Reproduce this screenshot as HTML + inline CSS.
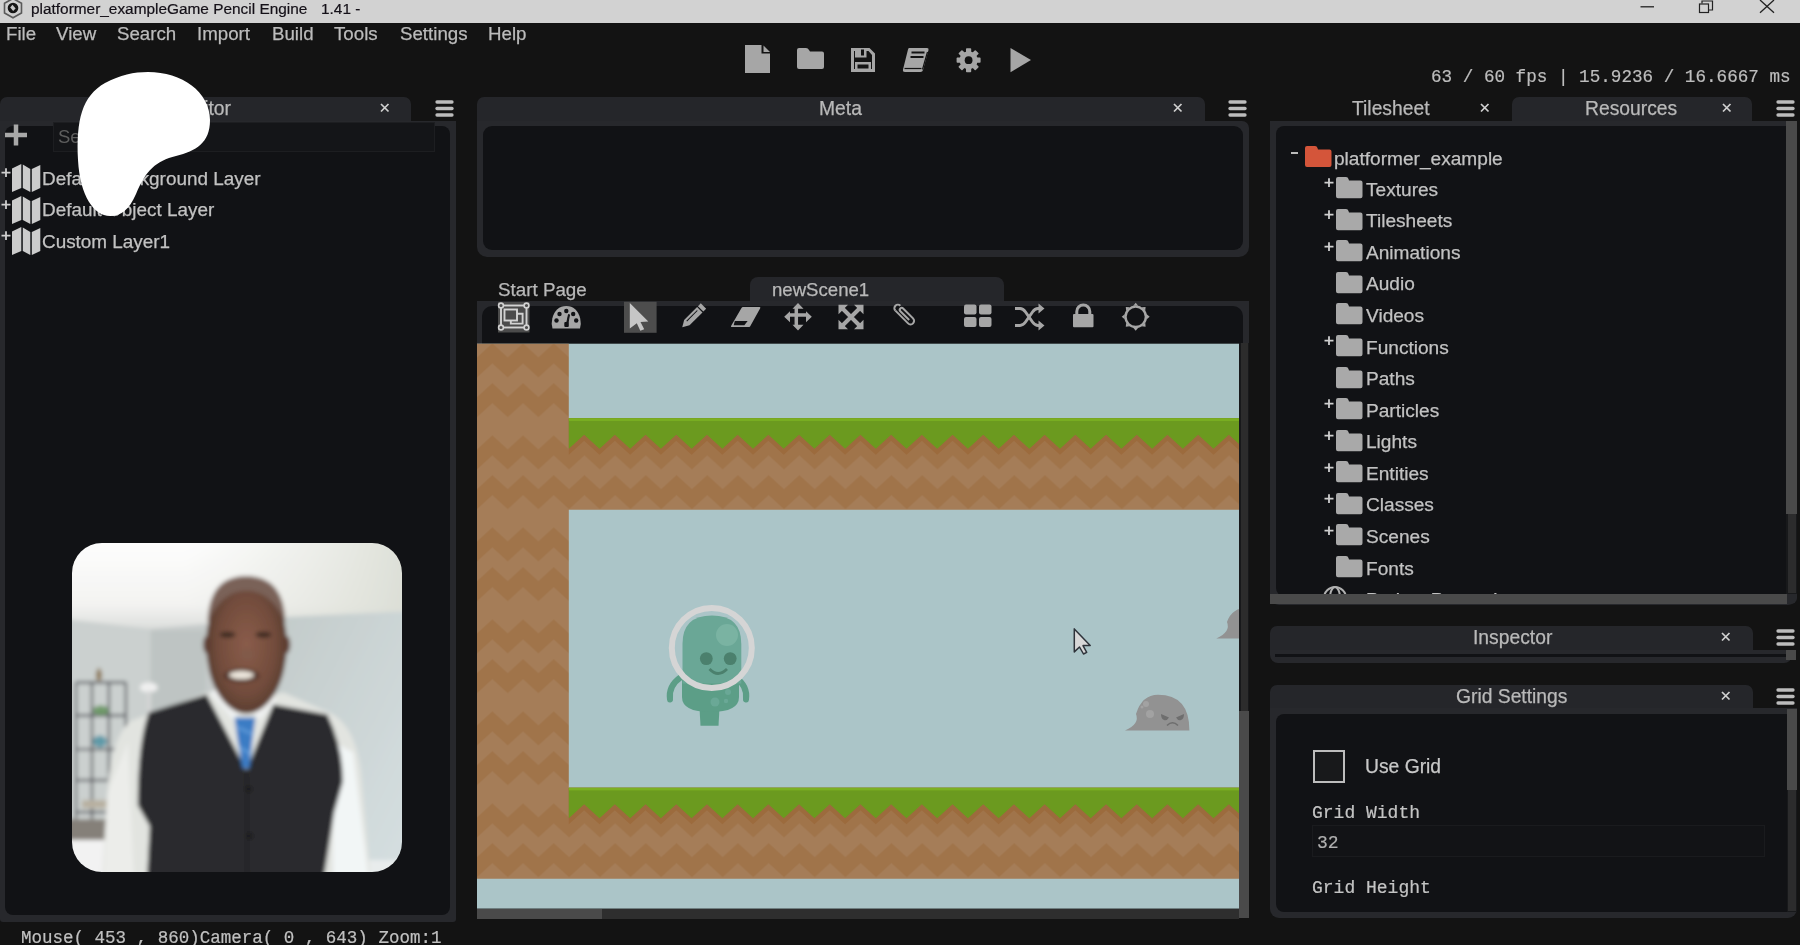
<!DOCTYPE html><html><head><meta charset="utf-8"><style>
*{margin:0;padding:0;box-sizing:border-box}
html,body{width:1800px;height:945px;overflow:hidden;background:#131313;font-family:"Liberation Sans",sans-serif;color:#b4b4b4}
.a{position:absolute}
.mono{font-family:"Liberation Mono",monospace}
.menu{top:22px;font-size:18.7px;color:#bcbcbc;line-height:24px;white-space:nowrap}
.hdr{background:#25262a;border-radius:7px 7px 0 0}
.frame{border:5px solid #27282c;background:#111215}
.ttl{font-size:19.3px;color:#b9b9b9;line-height:24px;white-space:nowrap;margin-top:1px}
.tree{font-size:19.1px;color:#c2c2c2;line-height:24px;white-space:nowrap;margin-top:1.5px}
svg{position:absolute;overflow:visible}
.a{will-change:transform}
.menu,.ttl,.tree{-webkit-text-stroke:0.25px currentColor}
.mono{-webkit-text-stroke:0.2px currentColor}
</style></head><body>
<div class="a" style="left:0;top:0;width:1800px;height:23px;background:#d2d2d2"></div>
<svg style="left:0;top:0" width="30" height="23"><path d="M13 -1.5 L21.5 3.3 L21.5 13 L13 17.8 L4.5 13 L4.5 3.3 Z" fill="#cfcfcf" stroke="#5a5a5a" stroke-width="1.6"/><circle cx="13" cy="8" r="5.3" fill="#151515"/><path d="M12.5 4.8 L15.6 8.6 L13.2 11 L10.2 7.4 Z" fill="#c8c8c8"/></svg>
<div class="a" style="left:31px;top:-3px;font-size:15.4px;line-height:24px;color:#141018;white-space:nowrap;-webkit-text-stroke:0.2px #141018">platformer_exampleGame Pencil Engine</div>
<div class="a" style="left:321px;top:-3px;font-size:15.4px;line-height:24px;color:#141018;white-space:nowrap;-webkit-text-stroke:0.2px #141018">1.41 -</div>
<svg style="left:0;top:0" width="1800" height="23"><line x1="1640.5" y1="6.8" x2="1654" y2="6.8" stroke="#222" stroke-width="1.3"/><rect x="1699.5" y="4" width="9" height="8.5" fill="none" stroke="#222" stroke-width="1.2"/><path d="M1702 3.5 V1 H1712.5 V10 H1709" fill="none" stroke="#222" stroke-width="1.2"/><path d="M1760 0 L1774 12.8 M1774 0 L1760 12.8" stroke="#222" stroke-width="1.3"/></svg>
<div class="a menu" style="left:6px">File</div>
<div class="a menu" style="left:56px">View</div>
<div class="a menu" style="left:117px">Search</div>
<div class="a menu" style="left:197px">Import</div>
<div class="a menu" style="left:272px">Build</div>
<div class="a menu" style="left:334px">Tools</div>
<div class="a menu" style="left:400px">Settings</div>
<div class="a menu" style="left:488px">Help</div>
<svg style="left:0;top:0" width="1800" height="90" fill="#a6a6a6"><path d="M745 45 H761.5 V53.5 H770 V73 H745 Z"/><path d="M763.5 45.5 L770 52 H763.5 Z"/><path d="M799 48 H806 Q808 48 809 50 L810 51.5 H822 Q824 51.5 824 53.5 V67 Q824 69 822 69 H799 Q797 69 797 67 V50 Q797 48 799 48 Z"/><path fill-rule="evenodd" d="M851 48 H869.5 L875 53.5 V72 H851 Z M854 51 V69 H872 V55 L868.5 51 H866.5 V57.5 H855 V51 Z"/><rect x="861" y="49.5" width="3" height="6" fill="#121212"/><path fill-rule="evenodd" d="M855 62 H871 V72 H855 Z M857.5 64.5 V68.5 H868.5 V64.5 Z"/><path d="M909 48 H927 Q929 48 928.5 50 L923 70 Q922.5 72 920.5 72 H905 Q902.5 72 903 69.5 L908 49.5 Q908.3 48 909 48 Z"/><path d="M922.5 69.5 L927.5 52" stroke="#121212" stroke-width="1.2"/><path d="M904.5 68.5 H921.5" stroke="#121212" stroke-width="1.2"/><path d="M911.5 52.5 H924.5 M910.5 57 H923.5" stroke="#121212" stroke-width="1.9"/><g transform="translate(968.6 60.2)"><circle r="9" /><g><rect x="-2.6" y="-12" width="5.2" height="6" rx="0.8" transform="rotate(0)"/><rect x="-2.6" y="-12" width="5.2" height="6" rx="0.8" transform="rotate(45)"/><rect x="-2.6" y="-12" width="5.2" height="6" rx="0.8" transform="rotate(90)"/><rect x="-2.6" y="-12" width="5.2" height="6" rx="0.8" transform="rotate(135)"/><rect x="-2.6" y="-12" width="5.2" height="6" rx="0.8" transform="rotate(180)"/><rect x="-2.6" y="-12" width="5.2" height="6" rx="0.8" transform="rotate(225)"/><rect x="-2.6" y="-12" width="5.2" height="6" rx="0.8" transform="rotate(270)"/><rect x="-2.6" y="-12" width="5.2" height="6" rx="0.8" transform="rotate(315)"/></g><circle r="3.9" fill="#121212"/></g><path d="M1010.5 48 L1031 60 L1010.5 72.2 Z"/></svg>
<div class="a mono" style="left:1431px;top:65px;font-size:17.64px;line-height:24px;color:#bdbdbd;white-space:pre">63 / 60 fps | 15.9236 / 16.6667 ms</div>
<div class="a hdr" style="left:0;top:97px;width:411px;height:24px"></div>
<div class="a" style="left:0;top:120.5px;width:456px;height:800.5px;background:#27282c;border-radius:0 0 3px 3px"></div>
<div class="a" style="left:5px;top:126px;width:445px;height:789px;background:#111215;border-radius:8px"></div>
<div class="a ttl" style="left:126.7px;top:96px">Layer Editor</div>
<svg style="left:380px;top:103px" width="10" height="10"><path d="M1 1 L8.5 8.5 M8.5 1 L1 8.5" stroke="#d0d0d0" stroke-width="1.75"/></svg>
<svg style="left:434.8px;top:100px" width="20" height="18"><g stroke="#bcbcbc" stroke-width="3.3" stroke-linecap="round"><line x1="2" y1="2" x2="17" y2="2"/><line x1="2" y1="8.5" x2="17" y2="8.5"/><line x1="2" y1="15" x2="17" y2="15"/></g></svg>
<svg style="left:0;top:120px" width="40" height="30"><path d="M5 15 H27 M16 4.5 V25.5" stroke="#a8a8a8" stroke-width="4.5"/></svg>
<div class="a" style="left:53px;top:122px;width:382px;height:30px;background:#141518;border:1px solid #1d1e21"></div>
<div class="a" style="left:58px;top:125px;font-size:18.5px;line-height:24px;color:#5e5e5e">Search...</div>
<svg style="left:1px;top:168.0px" width="12" height="12"><path d="M0.5 4.6 H9.5 M5 0.2 V9" stroke="#cfcfcf" stroke-width="1.8"/></svg>
<svg style="left:11.7px;top:164.0px" width="30" height="30" fill="#cccccc"><path d="M0 4.5 L9.3 0 V24 L0 28 Z"/><path d="M10.8 0.5 L18.3 5 V28 L10.8 24 Z"/><path d="M19.8 5 L28.3 1 V24 L19.8 28 Z"/></svg>
<div class="a tree" style="left:42px;top:165.2px;font-size:18.9px">Default Background Layer</div>
<svg style="left:1px;top:199.5px" width="12" height="12"><path d="M0.5 4.6 H9.5 M5 0.2 V9" stroke="#cfcfcf" stroke-width="1.8"/></svg>
<svg style="left:11.7px;top:195.5px" width="30" height="30" fill="#cccccc"><path d="M0 4.5 L9.3 0 V24 L0 28 Z"/><path d="M10.8 0.5 L18.3 5 V28 L10.8 24 Z"/><path d="M19.8 5 L28.3 1 V24 L19.8 28 Z"/></svg>
<div class="a tree" style="left:42px;top:196.7px;font-size:18.9px">Default Object Layer</div>
<svg style="left:1px;top:231.0px" width="12" height="12"><path d="M0.5 4.6 H9.5 M5 0.2 V9" stroke="#cfcfcf" stroke-width="1.8"/></svg>
<svg style="left:11.7px;top:227.0px" width="30" height="30" fill="#cccccc"><path d="M0 4.5 L9.3 0 V24 L0 28 Z"/><path d="M10.8 0.5 L18.3 5 V28 L10.8 24 Z"/><path d="M19.8 5 L28.3 1 V24 L19.8 28 Z"/></svg>
<div class="a tree" style="left:42px;top:228.2px;font-size:18.9px">Custom Layer1</div>
<div class="a hdr" style="left:477px;top:97px;width:727.5px;height:25px"></div>
<div class="a" style="left:477px;top:120.5px;width:772px;height:135.5px;border-radius:0 7px 10px 10px;background:#27282c"></div>
<div class="a" style="left:483px;top:126px;width:760px;height:124px;background:#111215;border-radius:9px"></div>
<div class="a ttl" style="left:819px;top:96px">Meta</div>
<svg style="left:1173px;top:103px" width="10" height="10"><path d="M1 1 L8.5 8.5 M8.5 1 L1 8.5" stroke="#d0d0d0" stroke-width="1.75"/></svg>
<svg style="left:1227.8px;top:100px" width="20" height="18"><g stroke="#bcbcbc" stroke-width="3.3" stroke-linecap="round"><line x1="2" y1="2" x2="17" y2="2"/><line x1="2" y1="8.5" x2="17" y2="8.5"/><line x1="2" y1="15" x2="17" y2="15"/></g></svg>
<div class="a" style="left:750px;top:277px;width:254px;height:26px;background:#25262a;border-radius:8px 8px 0 0"></div>
<div class="a ttl" style="left:497.5px;top:277px;font-size:18.8px">Start Page</div>
<div class="a ttl" style="left:771.5px;top:277px;font-size:18.6px">newScene1</div>
<div class="a" style="left:477px;top:301px;width:772px;height:45px;background:#27282c"></div>
<div class="a" style="left:482px;top:306px;width:761px;height:45px;background:#111215;border-radius:10px 10px 0 0"></div>
<svg style="left:0;top:0" width="1800" height="345" fill="#a6a6a6"><rect x="498" y="302" width="31.5" height="30.5" fill="#4b4b4b"/><g stroke="#d2d2d2" stroke-width="1.9" fill="none"><rect x="501" y="305.5" width="25.5" height="22"/><rect x="504.5" y="309.5" width="12.5" height="11" fill="#4a4a4a"/><path d="M517 313.8 H522.6 V323.6 H510.8 V320.5"/></g><g fill="#4b4b4b" stroke="#d2d2d2" stroke-width="1.6"><circle cx="501" cy="305.5" r="2.4"/><circle cx="526.5" cy="305.5" r="2.4"/><circle cx="501" cy="327.5" r="2.4"/><circle cx="526.5" cy="327.5" r="2.4"/></g><path d="M552.5 328.5 Q551 324 552.3 318.5 Q555.5 306 566.3 306 Q577 306 580.2 318.5 Q581.5 324 580 328.5 Z"/><g fill="#111215"><circle cx="566.3" cy="311" r="2.2"/><circle cx="559.5" cy="314" r="2.2"/><circle cx="573.2" cy="314" r="2.2"/><circle cx="556.5" cy="320.5" r="2.2"/><circle cx="576.2" cy="320.5" r="2.2"/><path d="M568.5 314.5 L566.8 322.5 L568 322.8 L569.5 314.8 Z" stroke="#111215" stroke-width="1"/><rect x="564.3" y="322" width="4.5" height="5" rx="1"/></g><rect x="624" y="301.8" width="32.6" height="31" fill="#4d4d4d"/><path d="M629.8 303 L648.3 321.5 L640.5 322 L644.2 329.3 L640.3 330.8 L636.8 323.3 L629.8 328.5 Z" fill="#c6c6c6"/><g transform="translate(692.5 317) rotate(45)"><path d="M-3.8 -15.5 H3.8 V-11.5 H-3.8 Z"/><path d="M-3.8 -10.3 H3.8 V8 L0 14.5 L-3.8 8 Z"/><path d="M-1.2 -8 V7" stroke="#111215" stroke-width="1"/></g><g transform="translate(746 317)"><path d="M-5 10 L-14.5 10 Q-15.5 10 -14.8 8.8 L-4.5 -9 Q-4 -10 -3 -10 H13.5 Q14.8 -10 14.2 -8.8 L4.5 8.8 Q4 10 3 10 Z"/><path d="M-11.2 4 L1.6 4 L-1.6 8.3 L-12.3 8.3 Z" fill="#111215"/></g><g transform="translate(798 316.8)"><path d="M-1.7 -10 V10 M-10 -1.7 H10" stroke="#a6a6a6" stroke-width="3.5"/><path d="M0 -13.8 L-5.5 -8 H5.5 Z M0 13.8 L-5.5 8 H5.5 Z M-13.8 0 L-8 -5.5 V5.5 Z M13.8 0 L8 -5.5 V5.5 Z"/></g><g transform="translate(851 317)"><path d="M-8 -8 L8 8 M8 -8 L-8 8" stroke="#a6a6a6" stroke-width="4"/><path d="M-12.5 -12.2 H-3 L-12.5 -2.7 Z M12.5 -12.2 H3 L12.5 -2.7 Z M-12.5 12.2 H-3 L-12.5 2.7 Z M12.5 12.2 H3 L12.5 2.7 Z"/></g><g transform="translate(904.5 317) rotate(45) scale(0.78)" fill="none" stroke="#a6a6a6" stroke-width="2.6"><path d="M-14 2.5 H9 A4.5 4.5 0 0 0 9 -6.5 H-9 A2.5 2.5 0 0 0 -9 -1.5 H7"/><path d="M-14 2.5 A4.5 4.5 0 0 1 -14 -6.5"/></g><rect x="964" y="304.5" width="12.5" height="10" rx="2"/><rect x="979" y="304.5" width="12.5" height="10" rx="2"/><rect x="964" y="317" width="12.5" height="10" rx="2"/><rect x="979" y="317" width="12.5" height="10" rx="2"/><g fill="none" stroke="#a6a6a6" stroke-width="3"><path d="M1015 308.5 H1020 Q1023 308.5 1025.5 312 L1032.5 322 Q1035 325.5 1038 325.5 H1040"/><path d="M1015 325.5 H1020 Q1023 325.5 1025.5 322 L1032.5 312 Q1035 308.5 1038 308.5 H1040"/></g><path d="M1038.5 303.5 L1044.5 308.5 L1038.5 313.5 Z M1038.5 320.5 L1044.5 325.5 L1038.5 330.5 Z"/><rect x="1073" y="314" width="20.5" height="13.3" rx="1"/><path d="M1076.8 314.5 V311.5 A6.5 6.5 0 0 1 1089.8 311.5 V314.5" fill="none" stroke="#a6a6a6" stroke-width="3"/><g transform="translate(1135.7 316.8)"><circle r="10.2" fill="none" stroke="#a6a6a6" stroke-width="2.4"/><path d="M-2.5 -11 L0 -14 L2.5 -11 Z" transform="rotate(0)"/><path d="M-2.5 -11 L0 -14 L2.5 -11 Z" transform="rotate(45)"/><path d="M-2.5 -11 L0 -14 L2.5 -11 Z" transform="rotate(90)"/><path d="M-2.5 -11 L0 -14 L2.5 -11 Z" transform="rotate(135)"/><path d="M-2.5 -11 L0 -14 L2.5 -11 Z" transform="rotate(180)"/><path d="M-2.5 -11 L0 -14 L2.5 -11 Z" transform="rotate(225)"/><path d="M-2.5 -11 L0 -14 L2.5 -11 Z" transform="rotate(270)"/><path d="M-2.5 -11 L0 -14 L2.5 -11 Z" transform="rotate(315)"/></g></svg>
<svg style="left:0;top:0" width="1800" height="945"><defs><clipPath id="gclip"><rect x="477" y="343.4" width="762" height="565.4"/></clipPath><pattern id="dirt" patternUnits="userSpaceOnUse" x="477" y="343.4" width="30.7" height="92"><rect width="30.7" height="92" fill="#a57d58"/><path d="M0 14 L15.35 0 L30.7 14 L30.7 34 L15.35 20 L0 34 Z" fill="#a0744a"/><path d="M0 53.7 L15.35 39.7 L30.7 53.7 L30.7 73.7 L15.35 59.7 L0 73.7 Z" fill="#a0744a"/><path d="M0 106 L15.35 92 L30.7 106 L30.7 126 L15.35 112 L0 126 Z" fill="#a0744a"/></pattern></defs><g clip-path="url(#gclip)"><rect x="477" y="343.4" width="762" height="565.4" fill="#abc5c8"/><path d="M477 343.4 H568.8 V418.3 H1250 V509.7 H568.8 V787.8 H1250 V878.8 H477 Z" fill="url(#dirt)"/><path d="M568.80 418.30 L1260.00 418.30 L1305.60 454.80 L1290.25 440.80 L1274.90 454.80 L1259.55 440.80 L1244.20 454.80 L1228.85 440.80 L1213.50 454.80 L1198.15 440.80 L1182.80 454.80 L1167.45 440.80 L1152.10 454.80 L1136.75 440.80 L1121.40 454.80 L1106.05 440.80 L1090.70 454.80 L1075.35 440.80 L1060.00 454.80 L1044.65 440.80 L1029.30 454.80 L1013.95 440.80 L998.60 454.80 L983.25 440.80 L967.90 454.80 L952.55 440.80 L937.20 454.80 L921.85 440.80 L906.50 454.80 L891.15 440.80 L875.80 454.80 L860.45 440.80 L845.10 454.80 L829.75 440.80 L814.40 454.80 L799.05 440.80 L783.70 454.80 L768.35 440.80 L753.00 454.80 L737.65 440.80 L722.30 454.80 L706.95 440.80 L691.60 454.80 L676.25 440.80 L660.90 454.80 L645.55 440.80 L630.20 454.80 L614.85 440.80 L599.50 454.80 L584.15 440.80 L568.80 454.80 Z" fill="#9c6b3d"/><path d="M568.80 418.30 L1260.00 418.30 L1305.60 448.80 L1290.25 434.80 L1274.90 448.80 L1259.55 434.80 L1244.20 448.80 L1228.85 434.80 L1213.50 448.80 L1198.15 434.80 L1182.80 448.80 L1167.45 434.80 L1152.10 448.80 L1136.75 434.80 L1121.40 448.80 L1106.05 434.80 L1090.70 448.80 L1075.35 434.80 L1060.00 448.80 L1044.65 434.80 L1029.30 448.80 L1013.95 434.80 L998.60 448.80 L983.25 434.80 L967.90 448.80 L952.55 434.80 L937.20 448.80 L921.85 434.80 L906.50 448.80 L891.15 434.80 L875.80 448.80 L860.45 434.80 L845.10 448.80 L829.75 434.80 L814.40 448.80 L799.05 434.80 L783.70 448.80 L768.35 434.80 L753.00 448.80 L737.65 434.80 L722.30 448.80 L706.95 434.80 L691.60 448.80 L676.25 434.80 L660.90 448.80 L645.55 434.80 L630.20 448.80 L614.85 434.80 L599.50 448.80 L584.15 434.80 L568.80 448.80 Z" fill="#6b9a1f"/><rect x="568.8" y="418.3" width="680" height="2.6" fill="#7bb022"/><path d="M568.80 787.80 L1260.00 787.80 L1305.60 824.30 L1290.25 810.30 L1274.90 824.30 L1259.55 810.30 L1244.20 824.30 L1228.85 810.30 L1213.50 824.30 L1198.15 810.30 L1182.80 824.30 L1167.45 810.30 L1152.10 824.30 L1136.75 810.30 L1121.40 824.30 L1106.05 810.30 L1090.70 824.30 L1075.35 810.30 L1060.00 824.30 L1044.65 810.30 L1029.30 824.30 L1013.95 810.30 L998.60 824.30 L983.25 810.30 L967.90 824.30 L952.55 810.30 L937.20 824.30 L921.85 810.30 L906.50 824.30 L891.15 810.30 L875.80 824.30 L860.45 810.30 L845.10 824.30 L829.75 810.30 L814.40 824.30 L799.05 810.30 L783.70 824.30 L768.35 810.30 L753.00 824.30 L737.65 810.30 L722.30 824.30 L706.95 810.30 L691.60 824.30 L676.25 810.30 L660.90 824.30 L645.55 810.30 L630.20 824.30 L614.85 810.30 L599.50 824.30 L584.15 810.30 L568.80 824.30 Z" fill="#9c6b3d"/><path d="M568.80 787.80 L1260.00 787.80 L1305.60 818.30 L1290.25 804.30 L1274.90 818.30 L1259.55 804.30 L1244.20 818.30 L1228.85 804.30 L1213.50 818.30 L1198.15 804.30 L1182.80 818.30 L1167.45 804.30 L1152.10 818.30 L1136.75 804.30 L1121.40 818.30 L1106.05 804.30 L1090.70 818.30 L1075.35 804.30 L1060.00 818.30 L1044.65 804.30 L1029.30 818.30 L1013.95 804.30 L998.60 818.30 L983.25 804.30 L967.90 818.30 L952.55 804.30 L937.20 818.30 L921.85 804.30 L906.50 818.30 L891.15 804.30 L875.80 818.30 L860.45 804.30 L845.10 818.30 L829.75 804.30 L814.40 818.30 L799.05 804.30 L783.70 818.30 L768.35 804.30 L753.00 818.30 L737.65 804.30 L722.30 818.30 L706.95 804.30 L691.60 818.30 L676.25 804.30 L660.90 818.30 L645.55 804.30 L630.20 818.30 L614.85 804.30 L599.50 818.30 L584.15 804.30 L568.80 818.30 Z" fill="#6b9a1f"/><rect x="568.8" y="787.8" width="680" height="2.6" fill="#7bb022"/></g></svg>
<svg style="left:0;top:0" width="1800" height="945"><path d="M670 699.5 Q668 686 681 677" fill="none" stroke="#5c9e87" stroke-width="6" stroke-linecap="round"/><path d="M746 699.5 Q748 686 735 677" fill="none" stroke="#5c9e87" stroke-width="6" stroke-linecap="round"/><path d="M699.5 708 H719.5 L718.5 725.8 H700.5 Z" fill="#5c9e87"/><path d="M682 680 H739 V697 Q739 712 710.5 712 Q682 712 682 697 Z" fill="#5c9e87"/><path d="M682.5 683.5 V644 Q682.5 615.5 712 615.5 Q741.3 615.5 741.3 644 V683.5 Z" fill="#6aa796"/><circle cx="727" cy="635" r="11" fill="#7ab3a2"/><circle cx="706.3" cy="658.6" r="6.4" fill="#4b806d"/><circle cx="730.2" cy="658.6" r="6.4" fill="#4b806d"/><path d="M709.5 669 Q718 678 727 669" fill="none" stroke="#4b806d" stroke-width="2.8"/><circle cx="715" cy="702" r="4.5" fill="#6aa896"/><circle cx="728" cy="692" r="3" fill="#6aa896"/><circle cx="726" cy="701" r="2.2" fill="#6aa896"/><circle cx="711.8" cy="648" r="40" fill="none" stroke="#d5d5d5" stroke-width="6"/><path d="M1125 730.5 Q1140 724 1136 714 Q1142 694.8 1158 694.8 Q1189.4 694.8 1189.4 730.5 Z" fill="#929292"/><circle cx="1146" cy="704" r="3" fill="#a2a2a2"/><circle cx="1150" cy="714" r="4" fill="#a2a2a2"/><circle cx="1142" cy="707" r="1.5" fill="#a2a2a2"/><path d="M1161 714 L1169 717.5 Q1167 721 1164 720 Q1161 719 1161 714 Z M1184 714 L1176 717.5 Q1178 721 1181 720 Q1184 719 1184 714 Z" fill="#6e6e6e"/><path d="M1167 725.5 Q1172.5 720 1178 725.5" fill="none" stroke="#6e6e6e" stroke-width="1.6"/><path d="M1216.3 638.4 Q1231 632 1227 622 Q1232 607.5 1248 607.5 V638.4 Z" fill="#929292"/><path d="M1074.3 628.9 V651.9 L1079.5 647 L1083.5 654 L1086.7 652.3 L1083 645.6 L1090.2 645.5 Z" fill="#d8d8d8" stroke="#2e333a" stroke-width="1.5" stroke-linejoin="round"/></svg>
<div class="a" style="left:1239px;top:343px;width:10px;height:368.4px;background:#18191b"></div>
<div class="a" style="left:1240.5px;top:343px;width:7px;height:368.4px;background:#2c2c2c"></div>
<div class="a" style="left:1239px;top:711.4px;width:10px;height:207px;background:#4a4a4a"></div>
<div class="a" style="left:477px;top:908.8px;width:762px;height:10.2px;background:#2e2e2e"></div>
<div class="a" style="left:477px;top:908.8px;width:125px;height:10.2px;background:#4a4a4a"></div>
<div class="a hdr" style="left:1512px;top:97px;width:240px;height:24px"></div>
<div class="a" style="left:1270px;top:120.8px;width:527px;height:483.6px;background:#27282c;border-radius:0 0 9px 9px"></div>
<div class="a" style="left:1276px;top:126.3px;width:515px;height:470px;background:#111215;border-radius:8px 0 0 8px"></div>
<div class="a ttl" style="left:1351.5px;top:96px">Tilesheet</div>
<svg style="left:1480px;top:103px" width="10" height="10"><path d="M1 1 L8.5 8.5 M8.5 1 L1 8.5" stroke="#d0d0d0" stroke-width="1.75"/></svg>
<div class="a ttl" style="left:1585px;top:96px">Resources</div>
<svg style="left:1721.5px;top:103px" width="10" height="10"><path d="M1 1 L8.5 8.5 M8.5 1 L1 8.5" stroke="#d0d0d0" stroke-width="1.75"/></svg>
<svg style="left:1775.8px;top:100px" width="20" height="18"><g stroke="#bcbcbc" stroke-width="3.3" stroke-linecap="round"><line x1="2" y1="2" x2="17" y2="2"/><line x1="2" y1="8.5" x2="17" y2="8.5"/><line x1="2" y1="15" x2="17" y2="15"/></g></svg>
<div class="a" style="left:1786px;top:120.8px;width:11px;height:473px;background:#18191b"></div>
<div class="a" style="left:1787.5px;top:120.8px;width:8px;height:472px;background:#2c2c2d"></div>
<div class="a" style="left:1786px;top:120.8px;width:11px;height:393px;background:#4a4a4a"></div>
<div class="a" style="left:1270px;top:594px;width:517px;height:10.4px;background:#4a4a4a"></div>
<div class="a" style="left:1787px;top:594px;width:10px;height:10.4px;background:#27282c;border-radius:0 0 6px 0"></div>
<svg style="left:1291px;top:152px" width="8" height="3"><rect width="7" height="2" fill="#bbbbbb"/></svg>
<svg style="left:1304.5px;top:146px" width="26.5" height="21" fill="#d4553a"><path d="M2 0 H10 Q12 0 12.5 2 L13 3.5 H24.5 Q26.5 3.5 26.5 5.5 V19 Q26.5 21 24.5 21 H2 Q0 21 0 19 V2 Q0 0 2 0 Z"/></svg>
<div class="a tree" style="left:1333.8px;top:145px">platformer_example</div>
<svg style="left:1323.5px;top:178.39999999999998px" width="12" height="12"><path d="M0.5 4.6 H9.5 M5 0.2 V9" stroke="#cfcfcf" stroke-width="1.8"/></svg>
<svg style="left:1335.9px;top:177.2px" width="26.5" height="21.2" fill="#a9a9a9"><path d="M2 0 H10 Q12 0 12.5 2 L13 3.5 H24.5 Q26.5 3.5 26.5 5.5 V19.2 Q26.5 21.2 24.5 21.2 H2 Q0 21.2 0 19.2 V2 Q0 0 2 0 Z"/></svg>
<div class="a tree" style="left:1366px;top:176.2px">Textures</div>
<svg style="left:1323.5px;top:209.96999999999997px" width="12" height="12"><path d="M0.5 4.6 H9.5 M5 0.2 V9" stroke="#cfcfcf" stroke-width="1.8"/></svg>
<svg style="left:1335.9px;top:208.76999999999998px" width="26.5" height="21.2" fill="#a9a9a9"><path d="M2 0 H10 Q12 0 12.5 2 L13 3.5 H24.5 Q26.5 3.5 26.5 5.5 V19.2 Q26.5 21.2 24.5 21.2 H2 Q0 21.2 0 19.2 V2 Q0 0 2 0 Z"/></svg>
<div class="a tree" style="left:1366px;top:207.76999999999998px">Tilesheets</div>
<svg style="left:1323.5px;top:241.53999999999996px" width="12" height="12"><path d="M0.5 4.6 H9.5 M5 0.2 V9" stroke="#cfcfcf" stroke-width="1.8"/></svg>
<svg style="left:1335.9px;top:240.33999999999997px" width="26.5" height="21.2" fill="#a9a9a9"><path d="M2 0 H10 Q12 0 12.5 2 L13 3.5 H24.5 Q26.5 3.5 26.5 5.5 V19.2 Q26.5 21.2 24.5 21.2 H2 Q0 21.2 0 19.2 V2 Q0 0 2 0 Z"/></svg>
<div class="a tree" style="left:1366px;top:239.33999999999997px">Animations</div>
<svg style="left:1335.9px;top:271.90999999999997px" width="26.5" height="21.2" fill="#a9a9a9"><path d="M2 0 H10 Q12 0 12.5 2 L13 3.5 H24.5 Q26.5 3.5 26.5 5.5 V19.2 Q26.5 21.2 24.5 21.2 H2 Q0 21.2 0 19.2 V2 Q0 0 2 0 Z"/></svg>
<div class="a tree" style="left:1366px;top:270.90999999999997px">Audio</div>
<svg style="left:1335.9px;top:303.48px" width="26.5" height="21.2" fill="#a9a9a9"><path d="M2 0 H10 Q12 0 12.5 2 L13 3.5 H24.5 Q26.5 3.5 26.5 5.5 V19.2 Q26.5 21.2 24.5 21.2 H2 Q0 21.2 0 19.2 V2 Q0 0 2 0 Z"/></svg>
<div class="a tree" style="left:1366px;top:302.48px">Videos</div>
<svg style="left:1323.5px;top:336.24999999999994px" width="12" height="12"><path d="M0.5 4.6 H9.5 M5 0.2 V9" stroke="#cfcfcf" stroke-width="1.8"/></svg>
<svg style="left:1335.9px;top:335.04999999999995px" width="26.5" height="21.2" fill="#a9a9a9"><path d="M2 0 H10 Q12 0 12.5 2 L13 3.5 H24.5 Q26.5 3.5 26.5 5.5 V19.2 Q26.5 21.2 24.5 21.2 H2 Q0 21.2 0 19.2 V2 Q0 0 2 0 Z"/></svg>
<div class="a tree" style="left:1366px;top:334.04999999999995px">Functions</div>
<svg style="left:1335.9px;top:366.62px" width="26.5" height="21.2" fill="#a9a9a9"><path d="M2 0 H10 Q12 0 12.5 2 L13 3.5 H24.5 Q26.5 3.5 26.5 5.5 V19.2 Q26.5 21.2 24.5 21.2 H2 Q0 21.2 0 19.2 V2 Q0 0 2 0 Z"/></svg>
<div class="a tree" style="left:1366px;top:365.62px">Paths</div>
<svg style="left:1323.5px;top:399.39px" width="12" height="12"><path d="M0.5 4.6 H9.5 M5 0.2 V9" stroke="#cfcfcf" stroke-width="1.8"/></svg>
<svg style="left:1335.9px;top:398.19px" width="26.5" height="21.2" fill="#a9a9a9"><path d="M2 0 H10 Q12 0 12.5 2 L13 3.5 H24.5 Q26.5 3.5 26.5 5.5 V19.2 Q26.5 21.2 24.5 21.2 H2 Q0 21.2 0 19.2 V2 Q0 0 2 0 Z"/></svg>
<div class="a tree" style="left:1366px;top:397.19px">Particles</div>
<svg style="left:1323.5px;top:430.96px" width="12" height="12"><path d="M0.5 4.6 H9.5 M5 0.2 V9" stroke="#cfcfcf" stroke-width="1.8"/></svg>
<svg style="left:1335.9px;top:429.76px" width="26.5" height="21.2" fill="#a9a9a9"><path d="M2 0 H10 Q12 0 12.5 2 L13 3.5 H24.5 Q26.5 3.5 26.5 5.5 V19.2 Q26.5 21.2 24.5 21.2 H2 Q0 21.2 0 19.2 V2 Q0 0 2 0 Z"/></svg>
<div class="a tree" style="left:1366px;top:428.76px">Lights</div>
<svg style="left:1323.5px;top:462.53px" width="12" height="12"><path d="M0.5 4.6 H9.5 M5 0.2 V9" stroke="#cfcfcf" stroke-width="1.8"/></svg>
<svg style="left:1335.9px;top:461.33px" width="26.5" height="21.2" fill="#a9a9a9"><path d="M2 0 H10 Q12 0 12.5 2 L13 3.5 H24.5 Q26.5 3.5 26.5 5.5 V19.2 Q26.5 21.2 24.5 21.2 H2 Q0 21.2 0 19.2 V2 Q0 0 2 0 Z"/></svg>
<div class="a tree" style="left:1366px;top:460.33px">Entities</div>
<svg style="left:1323.5px;top:494.09999999999997px" width="12" height="12"><path d="M0.5 4.6 H9.5 M5 0.2 V9" stroke="#cfcfcf" stroke-width="1.8"/></svg>
<svg style="left:1335.9px;top:492.9px" width="26.5" height="21.2" fill="#a9a9a9"><path d="M2 0 H10 Q12 0 12.5 2 L13 3.5 H24.5 Q26.5 3.5 26.5 5.5 V19.2 Q26.5 21.2 24.5 21.2 H2 Q0 21.2 0 19.2 V2 Q0 0 2 0 Z"/></svg>
<div class="a tree" style="left:1366px;top:491.9px">Classes</div>
<svg style="left:1323.5px;top:525.6700000000001px" width="12" height="12"><path d="M0.5 4.6 H9.5 M5 0.2 V9" stroke="#cfcfcf" stroke-width="1.8"/></svg>
<svg style="left:1335.9px;top:524.47px" width="26.5" height="21.2" fill="#a9a9a9"><path d="M2 0 H10 Q12 0 12.5 2 L13 3.5 H24.5 Q26.5 3.5 26.5 5.5 V19.2 Q26.5 21.2 24.5 21.2 H2 Q0 21.2 0 19.2 V2 Q0 0 2 0 Z"/></svg>
<div class="a tree" style="left:1366px;top:523.47px">Scenes</div>
<svg style="left:1335.9px;top:556.04px" width="26.5" height="21.2" fill="#a9a9a9"><path d="M2 0 H10 Q12 0 12.5 2 L13 3.5 H24.5 Q26.5 3.5 26.5 5.5 V19.2 Q26.5 21.2 24.5 21.2 H2 Q0 21.2 0 19.2 V2 Q0 0 2 0 Z"/></svg>
<div class="a tree" style="left:1366px;top:555.04px">Fonts</div>
<div class="a" style="left:1276px;top:584px;width:510px;height:10px;overflow:hidden"><svg style="left:46.7px;top:2px" width="26" height="26"><circle cx="12" cy="12" r="11" fill="none" stroke="#b0b0b0" stroke-width="2"/><ellipse cx="12" cy="12" rx="5" ry="11" fill="none" stroke="#b0b0b0" stroke-width="2"/></svg><div class="a tree" style="left:90px;top:2px">Project Properties</div></div>
<div class="a hdr" style="left:1270px;top:626px;width:483px;height:25px"></div>
<div class="a" style="left:1270px;top:650px;width:522px;height:13px;background:#27282c;border-radius:0 0 8px 8px"></div>
<div class="a" style="left:1275px;top:654px;width:511px;height:3.4px;background:#111215"></div>
<div class="a" style="left:1786px;top:650px;width:10px;height:10px;background:#4a4a4a"></div>
<div class="a ttl" style="left:1472.8px;top:625px">Inspector</div>
<svg style="left:1721px;top:632px" width="10" height="10"><path d="M1 1 L8.5 8.5 M8.5 1 L1 8.5" stroke="#d0d0d0" stroke-width="1.75"/></svg>
<svg style="left:1775.8px;top:629px" width="20" height="18"><g stroke="#bcbcbc" stroke-width="3.3" stroke-linecap="round"><line x1="2" y1="2" x2="17" y2="2"/><line x1="2" y1="8.5" x2="17" y2="8.5"/><line x1="2" y1="15" x2="17" y2="15"/></g></svg>
<div class="a hdr" style="left:1270px;top:684.5px;width:483px;height:26px"></div>
<div class="a" style="left:1270px;top:708.3px;width:527px;height:210px;background:#27282c;border-radius:0 0 9px 9px"></div>
<div class="a" style="left:1276px;top:714px;width:515px;height:198px;background:#111215;border-radius:8px 0 0 8px"></div>
<div class="a ttl" style="left:1455.5px;top:684px">Grid Settings</div>
<svg style="left:1721px;top:691px" width="10" height="10"><path d="M1 1 L8.5 8.5 M8.5 1 L1 8.5" stroke="#d0d0d0" stroke-width="1.75"/></svg>
<svg style="left:1775.8px;top:688px" width="20" height="18"><g stroke="#bcbcbc" stroke-width="3.3" stroke-linecap="round"><line x1="2" y1="2" x2="17" y2="2"/><line x1="2" y1="8.5" x2="17" y2="8.5"/><line x1="2" y1="15" x2="17" y2="15"/></g></svg>
<div class="a" style="left:1787px;top:709px;width:10px;height:203px;background:#18191b"></div>
<div class="a" style="left:1788px;top:709px;width:8px;height:202px;background:#2c2c2d"></div>
<div class="a" style="left:1787px;top:709px;width:10px;height:81px;background:#4a4a4a"></div>
<div class="a" style="left:1312.5px;top:750px;width:32px;height:32.5px;border:2px solid #bdbdbd;background:#18191b"></div>
<div class="a ttl" style="left:1364.5px;top:754px;color:#c8c8c8">Use Grid</div>
<div class="a mono" style="left:1312px;top:800.5px;font-size:18px;line-height:24px;color:#c4c4c4;white-space:pre">Grid Width</div>
<div class="a" style="left:1312px;top:825px;width:453px;height:31.5px;background:#121316;border:1px solid #1a1b1e"></div>
<div class="a mono" style="left:1317px;top:831px;font-size:18px;line-height:24px;color:#b0b0b0;white-space:pre">32</div>
<div class="a mono" style="left:1312px;top:875.5px;font-size:18px;line-height:24px;color:#c4c4c4;white-space:pre">Grid Height</div>
<div class="a mono" style="left:21px;top:925.5px;font-size:17.53px;line-height:24px;color:#c0c0c0;white-space:pre">Mouse( 453 , 860)Camera( 0 , 643) Zoom:1</div>
<svg style="left:0;top:0" width="300" height="300"><path d="M148 72 C182 72 210 92 210 120 C210 143 196 151 176 156 C156 161 146 170 136 194 C129 210 121 216 110 216 C94 216 80 196 78 160 C76 120 82 96 105 83 C120 75 134 72 148 72 Z" fill="#ffffff"/></svg>
<svg style="left:72px;top:543px" width="330" height="330" viewBox="0 0 331 331" preserveAspectRatio="none">
<defs>
<clipPath id="pc"><rect width="331" height="330" rx="30" ry="30"/></clipPath>
<filter id="pb" x="-5%" y="-5%" width="110%" height="110%"><feGaussianBlur stdDeviation="2"/></filter>
<linearGradient id="ceil" x1="0" y1="0" x2="0" y2="1"><stop offset="0" stop-color="#ffffff"/><stop offset="0.75" stop-color="#f3f3f1"/><stop offset="1" stop-color="#dcdedc"/></linearGradient><linearGradient id="ceilr" x1="0" y1="0" x2="1" y2="0"><stop offset="0.35" stop-color="#e4e6de" stop-opacity="0"/><stop offset="1" stop-color="#d8dbd2" stop-opacity="0.9"/></linearGradient>
<linearGradient id="rwall" x1="0" y1="0" x2="1" y2="1"><stop offset="0" stop-color="#c2cac9"/><stop offset="1" stop-color="#d6e0e2"/></linearGradient>
<radialGradient id="face" cx="0.5" cy="0.5" r="0.55"><stop offset="0" stop-color="#8a5c4a"/><stop offset="0.65" stop-color="#724c3c"/><stop offset="1" stop-color="#52382c"/></radialGradient>
</defs>
<g clip-path="url(#pc)">
<g filter="url(#pb)">
<rect x="-10" y="-10" width="351" height="350" fill="#c6cbca"/>
<rect x="200" y="60" width="141" height="280" fill="url(#rwall)"/>
<rect x="-10" y="75" width="89" height="220" fill="#cbd0cf"/>
<rect x="79" y="88" width="55" height="130" fill="#bec4c3"/>
<path d="M-10 -10 H341 V68 L218 74 L79 86 L-10 76 Z" fill="url(#ceil)"/><path d="M-10 -10 H341 V68 L218 74 L79 86 L-10 76 Z" fill="url(#ceilr)"/>
<!-- shelf -->
<g stroke="#3c3e46" stroke-width="2" fill="none">
<path d="M4 140 V278 M20 140 V278 M37 140 V278 M54 140 V278"/>
<path d="M4 140 H54 M4 173 H54 M4 207 H54 M4 238 H54 M4 270 H54"/>
</g>
<path d="M25 138 Q22 130 27 125 Q32 130 29 138 Z" fill="#8f7a5a"/>
<ellipse cx="29" cy="168" rx="8" ry="5" fill="#6f9a6a"/>
<ellipse cx="28" cy="199" rx="7" ry="6" fill="#5f9aa8"/>
<rect x="10" y="258" width="25" height="8" fill="#b8b0a0"/>
<ellipse cx="77" cy="145" rx="9" ry="5" fill="#f0f0f0"/>
<rect x="76" y="148" width="3" height="30" fill="#d8d8d8"/>
<!-- floor -->
<path d="M-10 277 H45 V340 H-10 Z" fill="#858079"/>
<path d="M-10 298 H34 V340 H-10 Z" fill="#f2f2f2"/>
<path d="M290 318 H341 V340 H290 Z" fill="#e8ecec"/>
<!-- shirt -->
<path d="M30 340 L36 240 Q42 190 60 178 L135 150 L172 158 L212 150 L258 170 Q284 182 290 230 L300 340 Z" fill="#e2e4e0"/>
<path d="M262 200 L282 210 L298 340 L262 340 Z" fill="#f2f6f6"/>
<path d="M36 250 L56 200 L62 340 L32 340 Z" fill="#ecedea"/>
<!-- vest -->
<path d="M75 340 L78 284 L66 263 Q66 200 77 170 L135 152 L175 228 L202 162 L256 172 Q272 205 271.5 240 L263 270 L252 340 Z" fill="#2c2c2e"/>
<path d="M175 228 L176 340" stroke="#1e1e20" stroke-width="2"/>
<circle cx="177" cy="247" r="3" fill="#141414"/><circle cx="178" cy="294" r="3" fill="#141414"/>
<!-- collar -->
<path d="M138 150 L162 178 L175 162 L188 178 L205 158 L194 140 L158 140 Z" fill="#eef0f0"/>
<!-- tie -->
<path d="M163 175 L184 175 L181 197 L178 226 L171 226 L166 197 Z" fill="#3b7cc4"/>
<path d="M166 185 L182 192 M168 205 L180 212" stroke="#6aa6e0" stroke-width="2"/>
<!-- neck -->
<path d="M150 130 Q176 165 200 130 L198 150 Q176 172 152 150 Z" fill="#4a3226"/>
<!-- head -->
<ellipse cx="175" cy="102" rx="40.5" ry="69" fill="url(#face)"/>
<path d="M136 80 Q137 33 175 33 Q213 33 214 80 Q200 48 175 48 Q150 48 136 80 Z" fill="#7a6258"/>
<ellipse cx="135.5" cy="102" rx="4" ry="9" fill="#5e3e30"/><ellipse cx="215" cy="102" rx="4" ry="9" fill="#5e3e30"/>
<ellipse cx="170" cy="133" rx="18" ry="7" fill="#53362a"/><ellipse cx="170" cy="132.5" rx="12.5" ry="4" fill="#ece6dc"/>
<ellipse cx="156" cy="92" rx="8" ry="3" fill="#3e2a20"/><ellipse cx="192" cy="92" rx="8" ry="3" fill="#3e2a20"/>
<ellipse cx="176" cy="112" rx="7" ry="6" fill="#815a48"/>
</g>
</g>
</svg>

</body></html>
